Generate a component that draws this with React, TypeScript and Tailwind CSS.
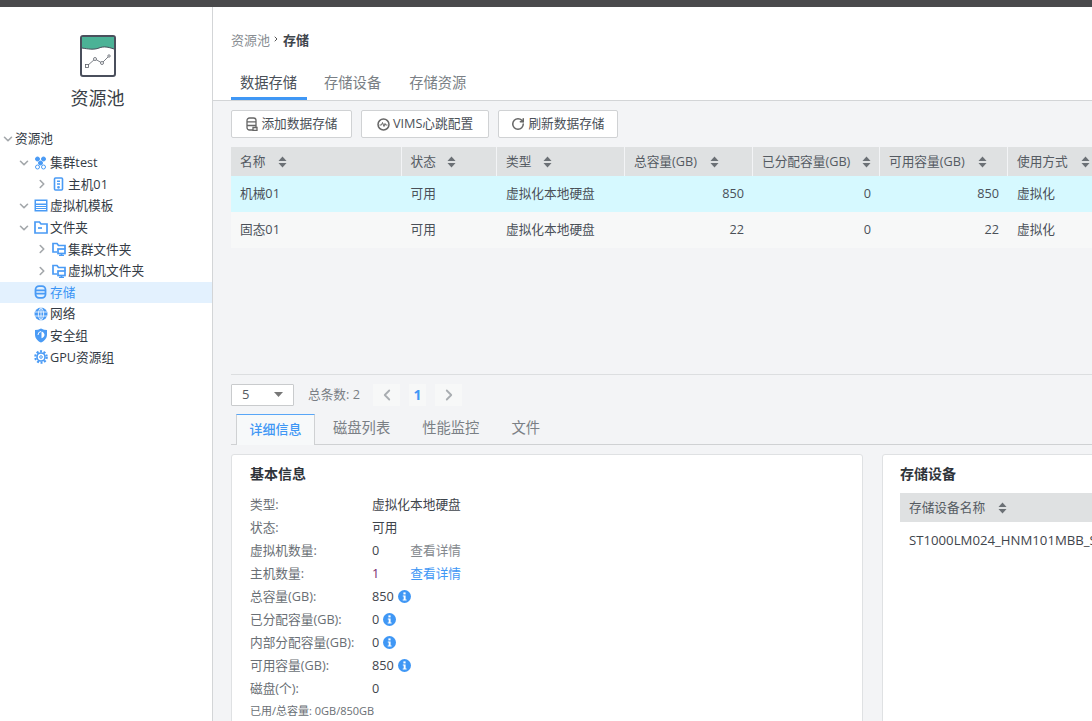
import React from "react";
import { ChevronDown, ChevronRight, ChevronLeft, RotateCw } from "lucide-react";

const font = { fontFamily: '"Open Sans","Noto Sans CJK SC",sans-serif' };

function Sort() {
  return (
    <svg width="9" height="12" viewBox="0 0 9 12" className="shrink-0">
      <path d="M4.5 0.5 L8.5 5 H0.5Z" fill="#6b7075" />
      <path d="M4.5 11.5 L8.5 7 H0.5Z" fill="#6b7075" />
    </svg>
  );
}

function TreeRow({ pad, arrow, icon, label, active }: { pad: string; arrow?: "down" | "right"; icon?: React.ReactNode; label: string; active?: boolean }) {
  return (
    <div className={`h-[21.6px] flex items-center ${pad} ${active ? "bg-[#e3f1fe] text-[#3a94f5]" : "text-[#333b45]"}`}>
      <span className="w-[14px] flex justify-center shrink-0">
        {arrow === "down" && <ChevronDown size={14} strokeWidth={2.8} className="text-[#a3a7ab]" />}
        {arrow === "right" && <ChevronRight size={14} strokeWidth={2.8} className="text-[#a3a7ab]" />}
      </span>
      {icon && <span className="w-[15px] h-[15px] ml-[2px] mr-[2px] flex items-center justify-center shrink-0">{icon}</span>}
      <span className="whitespace-nowrap">{label}</span>
    </div>
  );
}

const blue = "#4a9bf5";
const IconCluster = () => (
  <svg width="13" height="14" viewBox="0 0 13 14" fill="none" stroke={blue} strokeWidth="1">
    <circle cx="3.5" cy="3" r="2" fill={blue} /><circle cx="9.5" cy="3" r="2" fill={blue} />
    <circle cx="6.500" cy="7" r="2" fill={blue} /><circle cx="3.5" cy="11" r="2" /><circle cx="9.5" cy="11" r="2" />
  </svg>
);
const IconHost = () => (
  <svg width="13" height="14" viewBox="0 0 13 14" fill="none" stroke={blue} strokeWidth="1.6">
    <rect x="2.5" y="1" width="8" height="12" rx="1" /><path d="M5 4.2h3M5 7h3" /><circle cx="6.5" cy="10.3" r=".6" fill={blue} />
  </svg>
);
const IconTemplate = () => (
  <svg width="14" height="13" viewBox="0 0 14 13">
    <rect x="0.5" y="0.5" width="13" height="12" fill={blue} />
    <rect x="2" y="2" width="10" height="2.5" fill="#fff" />
    <rect x="2" y="6" width="10" height="1" fill="#fff" /><rect x="2" y="8" width="10" height="1" fill="#fff" /><rect x="2" y="10" width="10" height="1" fill="#fff" />
  </svg>
);
const IconFolder = () => (
  <svg width="14" height="13" viewBox="0 0 14 13" fill="none" stroke={blue} strokeWidth="1.7">
    <path d="M1 1h4.5l1.5 2h6v9H1z" /><path d="M4 7h4" />
  </svg>
);
const IconFolderNet = () => (
  <svg width="14" height="14" viewBox="0 0 14 14" fill="none" stroke={blue} strokeWidth="1.7">
    <path d="M5 10H1V1.500h4l1.500 2H13V7" /><rect x="6" y="7" width="7" height="4.500" /><path d="M9.500 11.500v2M7 13.500h5" />
  </svg>
);
const IconDb = () => (
  <svg width="13" height="14" viewBox="0 0 13 14" fill="none" stroke={blue} strokeWidth="1.800">
    <rect x="1.500" y="1.200" width="10" height="11.600" rx="3.500" /><path d="M1.500 5.300h10M1.500 8.700h10" />
  </svg>
);
const IconGlobe = () => (
  <svg width="14" height="14" viewBox="0 0 14 14">
    <circle cx="7" cy="7" r="6.500" fill={blue} />
    <path d="M1 5h12M1 9h12M7 .5v13M7 .5C3.500 4 3.500 10 7 13.500M7 .5c3.500 3.500 3.500 9.500 0 13" fill="none" stroke="#fff" strokeWidth=".8" />
  </svg>
);
const IconShield = () => (
  <svg width="14" height="15" viewBox="0 0 14 15">
    <path d="M7 .5c2 1 4 1.500 6 1.500v4.500c0 3.800-2.500 6.500-6 8-3.500-1.500-6-4.200-6-8V2c2 0 4-.5 6-1.500z" fill={blue} />
    <path d="M7.500 3.500c2 .5 3 2 3 3.500s-1.500 3-3 3.200z" fill="#fff" />
    <path d="M7 3.500A3.500 3.500 0 0 0 4 7" fill="none" stroke="#fff" strokeWidth="1" />
  </svg>
);
const IconGear = () => (
  <svg width="14" height="14" viewBox="0 0 14 14" fill="none" stroke={blue}>
    <circle cx="7" cy="7" r="5.700" strokeWidth="2.200" strokeDasharray="2 1.600" />
    <circle cx="7" cy="7" r="4" strokeWidth="1.600" />
    <circle cx="7" cy="7" r="1.300" strokeWidth="1" />
  </svg>
);

function Btn({ icon, label, cls }: { icon: React.ReactNode; label: string; cls: string }) {
  return (
    <div className={`h-[28px] bg-white border border-[#d0d2d4] rounded-[2px] flex items-center justify-center gap-[3px] text-[12.7px] text-[#4b5158] whitespace-nowrap ${cls}`}>
      {icon}<span>{label}</span>
    </div>
  );
}

function Th({ w, label, gap }: { w: string; label: string; gap: string }) {
  return (
    <div className={`${w} shrink-0 h-full bg-[#dfe1e2] flex items-center pl-[9px] text-[12.7px] text-[#555b62] whitespace-nowrap ${gap}`}>
      <span>{label}</span><Sort />
    </div>
  );
}

function Td({ w, label, right }: { w: string; label: string; right?: boolean }) {
  return (
    <div className={`${w} shrink-0 flex items-center text-[12.7px] text-[#4a5058] whitespace-nowrap ${right ? "justify-end pr-[8px]" : "pl-[9px]"}`}>{label}</div>
  );
}

function Row({ bg, a, b, c, d }: { bg: string; a: string; b: string; c: string; d: string }) {
  return (
    <div className={`h-[36px] flex gap-[1px] ${bg}`}>
      <Td w="w-[169.500px]" label={a} />
      <Td w="w-[94.500px]" label="可用" />
      <Td w="w-[127px]" label="虚拟化本地硬盘" />
      <Td w="w-[127px]" label={b} right />
      <Td w="w-[126px]" label={c} right />
      <Td w="w-[127px]" label={d} right />
      <Td w="w-[90px]" label="虚拟化" />
    </div>
  );
}

function InfoDot() {
  return (
    <svg width="13" height="13" viewBox="0 0 13 13" className="ml-[4px] shrink-0">
      <circle cx="6.500" cy="6.500" r="6.500" fill="#3f97f5" />
      <rect x="5.400" y="2.400" width="2.200" height="2" fill="#fff" />
      <path d="M4.800 5.400h2.800v4h1v1.200H4.700V9.400h1V6.600h-.9z" fill="#fff" />
    </svg>
  );
}

function Kv({ k, v, vc, link, linkc, info }: { k: string; v: string; vc?: string; link?: string; linkc?: string; info?: boolean }) {
  return (
    <div className="h-[23px] flex items-center whitespace-nowrap">
      <span className="w-[122px] text-[#6a6f75]">{k}</span>
      <span className={vc ?? "text-[#3f454c]"}>{v}</span>
      {info && <InfoDot />}
      {link && <span className={`ml-[31px] ${linkc}`}>{link}</span>}
    </div>
  );
}

export default function App() {
  return (
    <div style={font} className="w-[1092px] h-[721px] overflow-hidden flex flex-col bg-white">
      <div className="h-[7px] bg-[#4a4a4c] shrink-0" />
      <div className="flex-1 flex min-h-0">
        <aside className="w-[213px] shrink-0 border-r border-[#d3d5d7] bg-white text-[12.7px]">
          <div className="flex flex-col items-center pt-[28px] pr-[17px]">
            <svg width="36" height="42" viewBox="0 0 36 42">
              <rect x="1" y="1" width="34" height="40" rx="2" fill="#fff" stroke="#4a4f5c" strokeWidth="2" />
              <path d="M2 2h32v12c-6-2-10-3-15-1s-11 1-17 0z" fill="#4bb296" />
              <path d="M2 13c6 1 12 2 17 0s9-1 15 1" fill="none" stroke="#4a4f5c" strokeWidth="1" />
              <path d="M7 31l8-7 7 4 7-7" fill="none" stroke="#5b6068" strokeWidth=".8" />
              <rect x="5.500" y="29.500" width="3" height="3" fill="#fff" stroke="#5b6068" strokeWidth=".8" />
              <circle cx="15" cy="24" r="1.500" fill="#fff" stroke="#5b6068" strokeWidth=".8" />
              <circle cx="22" cy="28" r="1.500" fill="#fff" stroke="#5b6068" strokeWidth=".8" />
              <circle cx="29" cy="21" r="1.200" fill="#fff" stroke="#5b6068" strokeWidth=".8" />
            </svg>
            <div className="text-[18px] text-[#3a3f47] mt-[8px] leading-[27px]">资源池</div>
          </div>
          <div className="mt-[16px]">
            <div className="mb-[2.400px]"><TreeRow pad="pl-[1px]" arrow="down" label="资源池" /></div>
            <TreeRow pad="pl-[17px]" arrow="down" icon={<IconCluster />} label="集群test" />
            <TreeRow pad="pl-[35px]" arrow="right" icon={<IconHost />} label="主机01" />
            <TreeRow pad="pl-[17px]" arrow="down" icon={<IconTemplate />} label="虚拟机模板" />
            <TreeRow pad="pl-[17px]" arrow="down" icon={<IconFolder />} label="文件夹" />
            <TreeRow pad="pl-[35px]" arrow="right" icon={<IconFolderNet />} label="集群文件夹" />
            <TreeRow pad="pl-[35px]" arrow="right" icon={<IconFolderNet />} label="虚拟机文件夹" />
            <TreeRow pad="pl-[17px]" icon={<IconDb />} label="存储" active />
            <TreeRow pad="pl-[17px]" icon={<IconGlobe />} label="网络" />
            <TreeRow pad="pl-[17px]" icon={<IconShield />} label="安全组" />
            <TreeRow pad="pl-[17px]" icon={<IconGear />} label="GPU资源组" />
          </div>
        </aside>
        <main className="flex-1 min-w-0 flex flex-col bg-[#f3f4f6]">
          <header className="h-[94px] shrink-0 bg-white border-b border-[#d3d5d7] pl-[18px] flex flex-col">
            <div className="h-[34px] mt-[17px] flex items-center text-[13px] text-[#888d92] whitespace-nowrap">
              <span>资源池</span>
              <ChevronRight size={8} strokeWidth={3} className="text-[#555] ml-[2px] mr-[3px] mb-[3px]" />
              <span className="font-bold text-[#3f454c]">存储</span>
            </div>
            <div className="flex mt-[8px] h-[35px] text-[14.300px] text-[#7a7f85] whitespace-nowrap">
              <div className="w-[76px] h-[35px] flex items-center justify-center text-[#4a5058] border-b-[3px] border-[#3f97f5] pt-[3px] pr-[1px]">数据存储</div>
              <div className="ml-[17px] h-[32px] pt-[3px] flex items-center">存储设备</div>
              <div className="ml-[28px] h-[32px] pt-[3px] flex items-center">存储资源</div>
            </div>
          </header>
          <div className="flex-1 min-h-0 pl-[18px] flex flex-col">
            <div className="flex gap-[9px] mt-[9px] shrink-0">
              <Btn cls="w-[121px]" icon={
                <svg width="13" height="14" viewBox="0 0 13 14" fill="none" stroke="#666" strokeWidth="1.300">
                  <rect x="2" y="1" width="9" height="12" rx="2.500" /><path d="M2 4.800h9M2 8.500h9" /><path d="M8 10.500h4v3H8z" fill="#fff" />
                </svg>
              } label="添加数据存储" />
              <Btn cls="w-[128px]" icon={
                <svg width="13" height="13" viewBox="0 0 13 13" fill="none"><circle cx="6.500" cy="6.500" r="5.500" stroke="#666" strokeWidth="1.500" /><path d="M2.500 7h2l1-2.500 1.500 4 1-3 .5 1.500h2" stroke="#666" /></svg>
              } label="VIMS心跳配置" />
              <Btn cls="w-[120px]" icon={<RotateCw size={14} strokeWidth={2.6} className="text-[#666]" />} label="刷新数据存储" />
            </div>
            <div className="mt-[9px] h-[228px] shrink-0 border-b border-[#dcdee0] overflow-hidden mr-[-60px]">
              <div className="h-[29px] flex gap-[1px]">
                <Th w="w-[169.500px]" label="名称" gap="gap-[13px]" />
                <Th w="w-[94.500px]" label="状态" gap="gap-[11px]" />
                <Th w="w-[127px]" label="类型" gap="gap-[12px]" />
                <Th w="w-[127px]" label="总容量(GB)" gap="gap-[13px]" />
                <Th w="w-[126px]" label="已分配容量(GB)" gap="gap-[12px]" />
                <Th w="w-[127px]" label="可用容量(GB)" gap="gap-[13px]" />
                <Th w="w-[90px]" label="使用方式" gap="gap-[13px]" />
              </div>
              <Row bg="bg-[#d6f9ff]" a="机械01" b="850" c="0" d="850" />
              <Row bg="bg-[#f7f8f8]" a="固态01" b="22" c="0" d="22" />
            </div>
            <div className="h-[39px] shrink-0 flex items-center text-[12.7px] text-[#7a7f85] whitespace-nowrap">
              <div className="w-[63px] h-[22px] bg-white border border-[#c9cbcd] rounded-[1px] flex items-center justify-between pl-[10px] pr-[9px] text-[#555b62] text-[13px]">
                <span>5</span>
                <svg width="10" height="5" viewBox="0 0 10 5"><path d="M0 0h9L4.500 5z" fill="#777" /></svg>
              </div>
              <span className="ml-[14px] w-[52px]">总条数: 2</span>
              <span className="ml-[13px] w-[27px] h-[22px] bg-[#f7f8f8] flex items-center justify-center"><ChevronLeft size={18} strokeWidth={2.4} className="text-[#a9adb1]" /></span>
              <span className="ml-[9px] w-[17px] h-[22px] bg-[#f7f8f8] flex items-center justify-center text-[#3f97f5] font-bold text-[14px]">1</span>
              <span className="ml-[9px] w-[27px] h-[22px] bg-[#f7f8f8] flex items-center justify-center"><ChevronRight size={18} strokeWidth={2.4} className="text-[#a9adb1]" /></span>
            </div>
            <div className="h-[31px] shrink-0 flex border-b border-[#cfd1d3] text-[14.300px] text-[#7a7f85] whitespace-nowrap pl-[5px] mr-[-60px]">
              <div className="w-[79px] h-[31px] bg-[#f7f9fa] border border-[#cfd1d3] border-b-0 border-t-[#58a6f7] flex items-center justify-center text-[#3f97f5] text-[13px] font-medium">详细信息</div>
              <div className="ml-[18px] pb-[2px] flex items-center">磁盘列表</div>
              <div className="ml-[32px] pb-[2px] flex items-center">性能监控</div>
              <div className="ml-[32px] pb-[2px] flex items-center">文件</div>
            </div>
            <div className="flex gap-[19px] mt-[9px] mr-[-80px] flex-1 min-h-0">
              <section className="w-[632px] shrink-0 h-[300px] bg-white border border-[#dfe1e3] rounded-[3px] pl-[18px] text-[12.7px]">
                <h3 className="mt-[8px] h-[20px] flex items-center font-bold text-[14px] text-[#2f343a]">基本信息</h3>
                <div className="mt-[10px]">
                  <Kv k="类型:" v="虚拟化本地硬盘" />
                  <Kv k="状态:" v="可用" />
                  <Kv k="虚拟机数量:" v="0" link="查看详情" linkc="text-[#84898e]" />
                  <Kv k="主机数量:" v="1" vc="text-[#7a1f6e]" link="查看详情" linkc="text-[#3f97f5]" />
                  <Kv k="总容量(GB):" v="850" info />
                  <Kv k="已分配容量(GB):" v="0" info />
                  <Kv k="内部分配容量(GB):" v="0" info />
                  <Kv k="可用容量(GB):" v="850" info />
                  <Kv k="磁盘(个):" v="0" />
                  <div className="h-[22px] flex items-center text-[11px] text-[#6a6f75]">已用/总容量: 0GB/850GB</div>
                </div>
              </section>
              <section className="w-[300px] shrink-0 h-[300px] bg-white border border-[#dfe1e3] rounded-[3px] pl-[17px] text-[12.7px]">
                <h3 className="mt-[8px] h-[20px] flex items-center font-bold text-[14px] text-[#2f343a]">存储设备</h3>
                <div className="mt-[10px] h-[29px] bg-[#dfe1e2] flex items-center gap-[13px] pl-[9px] text-[#555b62]">
                  <span>存储设备名称</span><Sort />
                </div>
                <div className="h-[38px] pl-[9px] flex items-center whitespace-nowrap text-[#3f454c] text-[13.200px]">ST1000LM024_HNM101MBB_S316J9CG</div>
              </section>
            </div>
          </div>
        </main>
      </div>
    </div>
  );
}
